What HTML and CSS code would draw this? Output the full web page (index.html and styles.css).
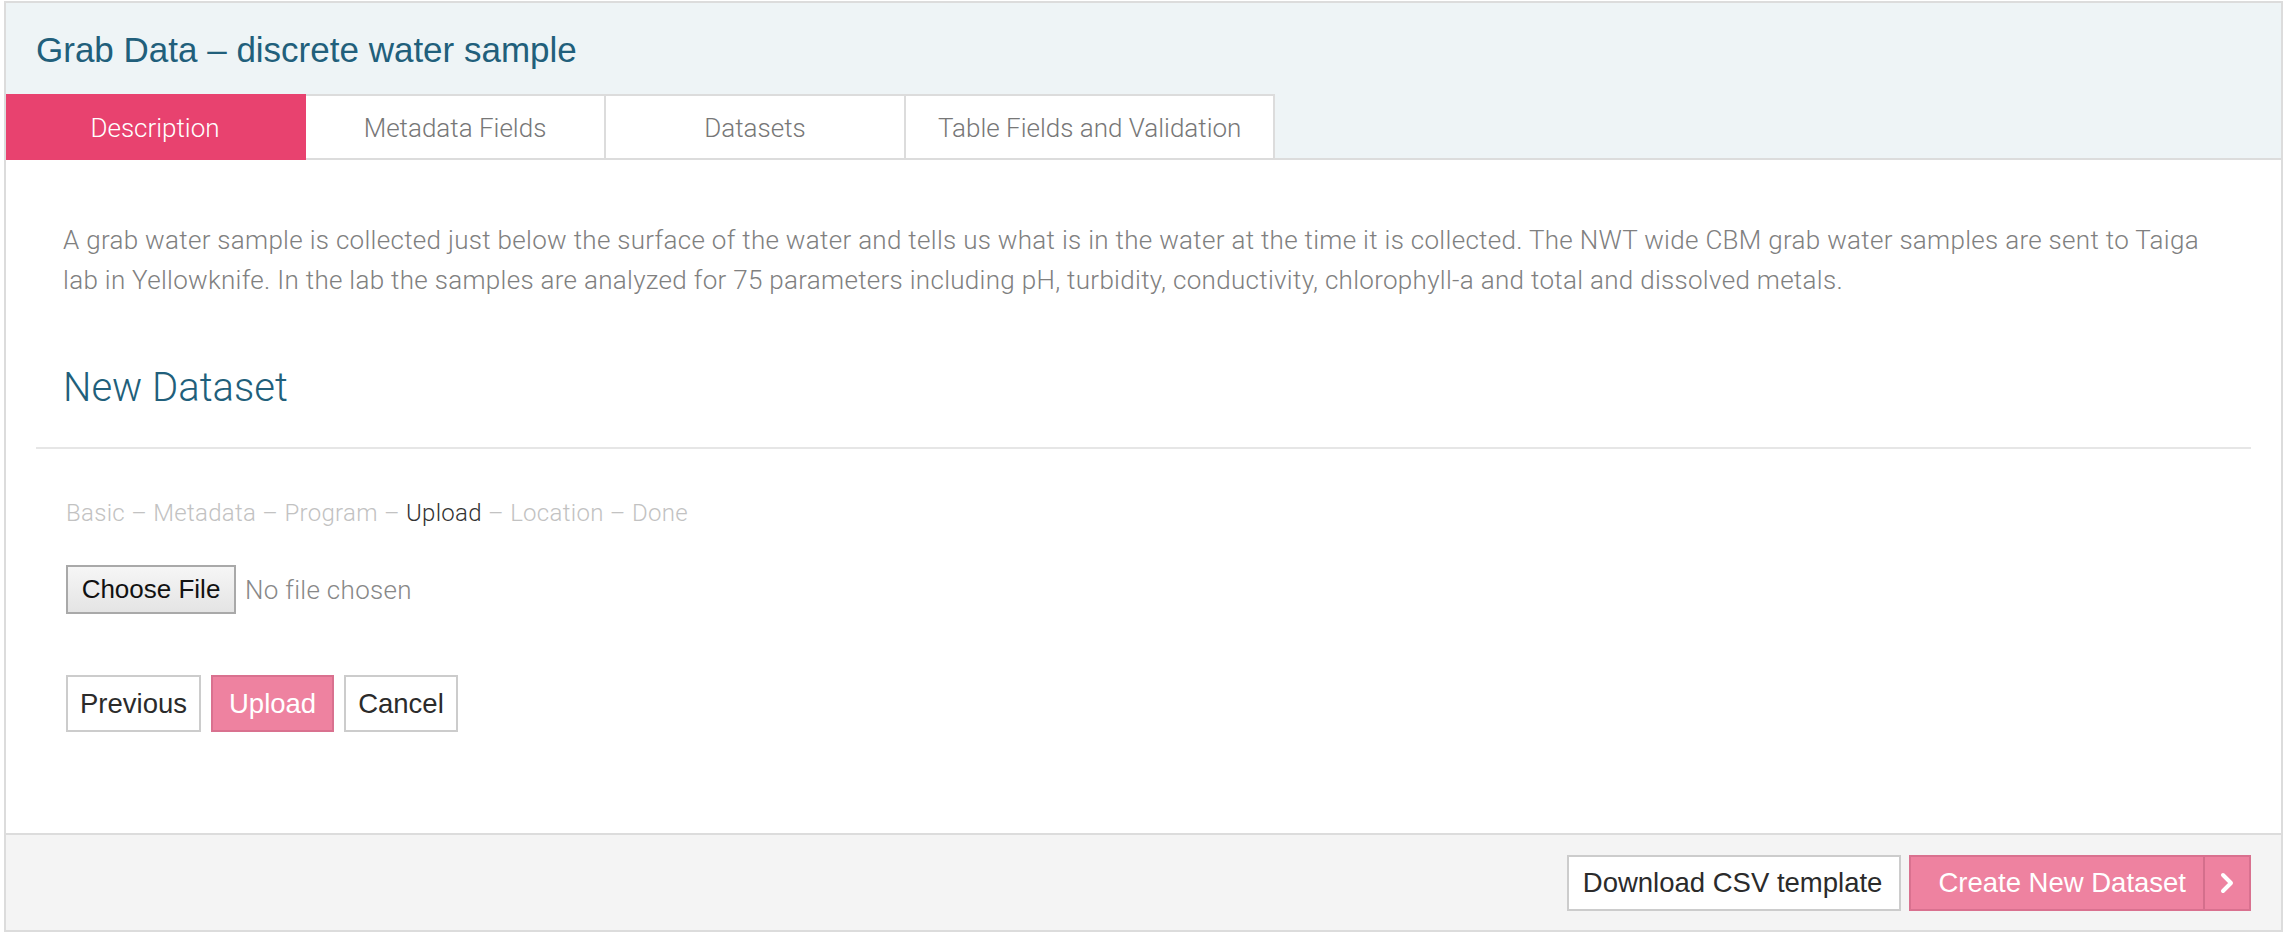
FILE: index.html
```html
<!DOCTYPE html>
<html lang="en">
<head>
<meta charset="utf-8">
<title>Grab Data – discrete water sample</title>
<link rel="stylesheet" href="styles.css">
</head>
<body>
<div class="panel">
  <div class="panel-head">
    <h1 class="title">Grab Data – discrete water sample</h1>
    <nav class="tabs">
      <a class="tab tab-active">Description</a>
      <a class="tab">Metadata Fields</a>
      <a class="tab">Datasets</a>
      <a class="tab">Table Fields and Validation</a>
    </nav>
  </div>
  <div class="panel-body">
    <p class="desc">A grab water sample is collected just below the surface of the water and tells us what is in the water at the time it is collected. The NWT wide CBM grab water samples are sent to Taiga lab in Yellowknife. In the lab the samples are analyzed for 75 parameters including pH, turbidity, conductivity, chlorophyll-a and total and dissolved metals.</p>
    <h2 class="section-title">New Dataset</h2>
    <hr class="divider">
    <div class="wizard">
      <div class="steps"><span>Basic</span> – <span>Metadata</span> – <span>Program</span> – <span class="step-current">Upload</span> – <span>Location</span> – <span>Done</span></div>
      <div class="file-row"><span class="file-btn">Choose File</span><span class="file-name">No file chosen</span></div>
      <div class="actions">
        <button class="btn">Previous</button>
        <button class="btn btn-primary">Upload</button>
        <button class="btn">Cancel</button>
      </div>
    </div>
  </div>
  <div class="panel-foot">
    <button class="btn btn-foot">Download CSV template</button>
    <button class="btn btn-primary btn-split"><span class="split-label">Create New Dataset</span><span class="split-icon"><svg width="14" height="22" viewBox="0 0 14 22"><polyline points="3,3 11,11 3,19" fill="none" stroke="#fff" stroke-width="4" stroke-linecap="round" stroke-linejoin="round"/></svg></span></button>
  </div>
</div>
</body>
</html>
```

FILE: styles.css
```css
html, body {
  margin: 0;
  padding: 0;
  background: #fff;
}

body {
  font-family: "Liberation Sans", Arial, sans-serif;
}

.panel {
  margin: 1px 5px 4px 4px;
  border: 2px solid #dcdcdc;
  display: flex;
  flex-direction: column;
}

.panel-head {
  background: #eef4f6;
  border-bottom: 2px solid #dcdcdc;
}

.title {
  margin: 0;
  padding: 27px 30px 0;
  font-family: "Liberation Sans", Arial, sans-serif;
  font-weight: 400;
  font-size: 35px;
  line-height: 40px;
  color: #215f7b;
}

.tabs {
  display: flex;
  margin-top: 24px;
  margin-bottom: -2px;
}

.tab {
  box-sizing: border-box;
  min-width: 300px;
  height: 66px;
  padding: 0 32px;
  background: #fff;
  border-top: 2px solid #dcdcdc;
  border-right: 2px solid #dcdcdc;
  border-bottom: 2px solid #dcdcdc;
  font-family: Roboto, "Liberation Sans", sans-serif;
  font-weight: 300;
  font-size: 26px;
  line-height: 64px;
  color: #777;
  text-align: center;
  white-space: nowrap;
}

.tab-active {
  background: #e8426f;
  border-color: #e8426f;
  color: #fff;
}

.panel-body {
  padding: 60px 30px 101px;
}

.desc {
  margin: 0 27px;
  font-family: Roboto, "Liberation Sans", sans-serif;
  font-weight: 300;
  font-size: 26px;
  line-height: 40px;
  letter-spacing: 0.3px;
  color: #808080;
}

.section-title {
  margin: 64px 0 0 27px;
  font-family: Roboto, "Liberation Sans", sans-serif;
  font-weight: 300;
  font-size: 40px;
  line-height: 48px;
  color: #215f7b;
}

.divider {
  margin: 35px 0 0;
  border: 0;
  height: 2px;
  background: #e6e6e6;
}

.wizard {
  padding-left: 30px;
}

.steps {
  margin-top: 49px;
  font-family: Roboto, "Liberation Sans", sans-serif;
  font-weight: 300;
  font-size: 24px;
  line-height: 30px;
  letter-spacing: 0.3px;
  color: #c2c2c2;
}

.step-current {
  color: #333;
}

.file-row {
  display: flex;
  align-items: center;
  margin-top: 37px;
}

.file-btn {
  box-sizing: border-box;
  height: 49px;
  width: 170px;
  border: 2px solid #a9a9a9;
  background: linear-gradient(#f6f6f6, #e4e4e4);
  font-size: 26px;
  line-height: 45px;
  color: #111;
  text-align: center;
}

.file-name {
  margin-left: 9px;
  font-family: Roboto, "Liberation Sans", sans-serif;
  font-weight: 300;
  font-size: 26px;
  letter-spacing: 0.3px;
  color: #888;
}

.actions {
  display: flex;
  gap: 10px;
  margin-top: 61px;
}

.btn {
  box-sizing: border-box;
  height: 57px;
  padding: 0 12px;
  border: 2px solid #cccccc;
  background: #fff;
  font-family: "Liberation Sans", Arial, sans-serif;
  font-size: 27.5px;
  color: #2b2b2b;
  cursor: pointer;
}

.btn-primary {
  background: #ee82a0;
  border-color: #d9718f;
  color: #fff;
  padding: 0 16px;
}

.panel-foot {
  display: flex;
  justify-content: flex-end;
  gap: 8px;
  padding: 20px 30px 19px;
  background: #f4f4f4;
  border-top: 2px solid #dcdcdc;
}

.btn-foot {
  height: 56px;
  padding: 0 17px 0 14px;
}

.btn-split {
  display: flex;
  align-items: stretch;
  height: 56px;
  padding: 0;
}

.split-label {
  display: flex;
  align-items: center;
  padding: 0 17px 0 27px;
  border-right: 2px solid #d46f8c;
}

.split-icon {
  display: flex;
  align-items: center;
  justify-content: center;
  width: 44px;
}
```
